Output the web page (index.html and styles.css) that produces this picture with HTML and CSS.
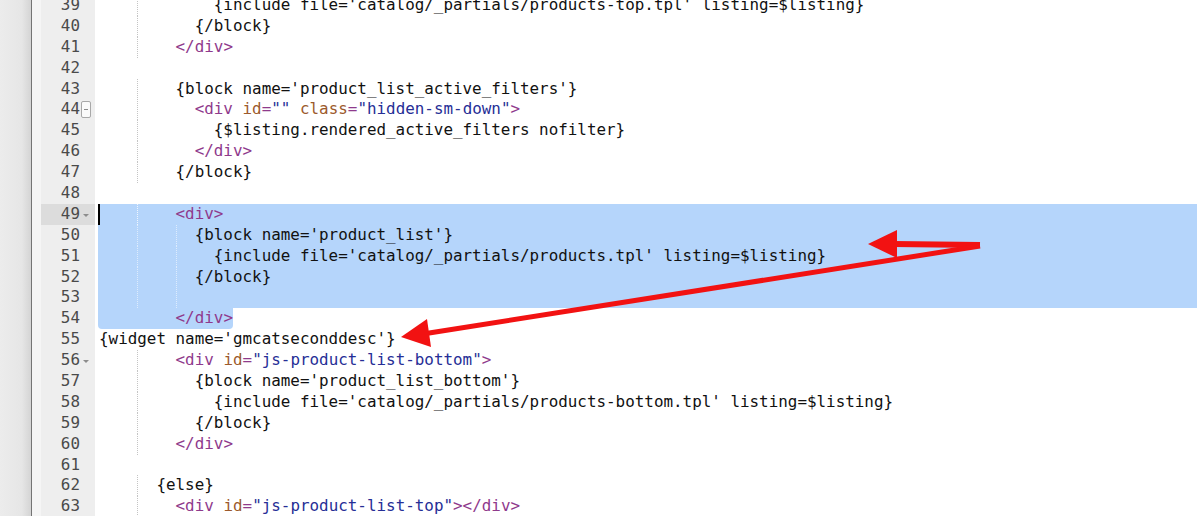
FILE: index.html
```html
<!DOCTYPE html>
<html lang="en">
<head>
  <meta charset="UTF-8">
  <title>category.tpl</title>
  <link rel="stylesheet" href="styles.css">
</head>
<body>
  <div class="editor">
    <div class="frame"></div>
    <div class="main">
      <div class="lines">
        <div class="line"><div class="num"><span class="n">39</span><span class="fold"></span></div><div class="code g4">            {include file='catalog/_partials/products-top.tpl' listing=$listing}</div></div>
        <div class="line"><div class="num"><span class="n">40</span><span class="fold"></span></div><div class="code g4">          {/block}</div></div>
        <div class="line"><div class="num"><span class="n">41</span><span class="fold"></span></div><div class="code g4">        <span class="tag">&lt;/div&gt;</span></div></div>
        <div class="line"><div class="num"><span class="n">42</span><span class="fold"></span></div><div class="code"></div></div>
        <div class="line"><div class="num"><span class="n">43</span><span class="fold"></span></div><div class="code g4">        {block name='product_list_active_filters'}</div></div>
        <div class="line"><div class="num"><span class="n">44</span><span class="fold"><span class="box"></span></span></div><div class="code g4">          <span class="tag">&lt;div</span> <span class="attr">id</span><span class="tag">=</span><span class="str">""</span> <span class="attr">class</span><span class="tag">=</span><span class="str">"hidden-sm-down"</span><span class="tag">&gt;</span></div></div>
        <div class="line"><div class="num"><span class="n">45</span><span class="fold"></span></div><div class="code g4">            {$listing.rendered_active_filters nofilter}</div></div>
        <div class="line"><div class="num"><span class="n">46</span><span class="fold"></span></div><div class="code g4">          <span class="tag">&lt;/div&gt;</span></div></div>
        <div class="line"><div class="num"><span class="n">47</span><span class="fold"></span></div><div class="code g4">        {/block}</div></div>
        <div class="line"><div class="num"><span class="n">48</span><span class="fold"></span></div><div class="code"></div></div>
        <div class="line"><div class="num current"><span class="n">49</span><span class="fold"><span class="tri"></span></span></div><div class="code g4 sel caret">        <span class="tag">&lt;div&gt;</span></div></div>
        <div class="line"><div class="num"><span class="n">50</span><span class="fold"></span></div><div class="code g48 sel">          {block name='product_list'}</div></div>
        <div class="line"><div class="num"><span class="n">51</span><span class="fold"></span></div><div class="code g48 sel">            {include file='catalog/_partials/products.tpl' listing=$listing}</div></div>
        <div class="line"><div class="num"><span class="n">52</span><span class="fold"></span></div><div class="code g48 sel">          {/block}</div></div>
        <div class="line"><div class="num"><span class="n">53</span><span class="fold"></span></div><div class="code g48 sel"></div></div>
        <div class="line"><div class="num"><span class="n">54</span><span class="fold"></span></div><div class="code g4"><span class="sel-end">        <span class="tag">&lt;/div&gt;</span></span></div></div>
        <div class="line"><div class="num"><span class="n">55</span><span class="fold"></span></div><div class="code">{widget name='gmcatseconddesc'}</div></div>
        <div class="line"><div class="num"><span class="n">56</span><span class="fold"><span class="tri"></span></span></div><div class="code g4">        <span class="tag">&lt;div</span> <span class="attr">id</span><span class="tag">=</span><span class="str">"js-product-list-bottom"</span><span class="tag">&gt;</span></div></div>
        <div class="line"><div class="num"><span class="n">57</span><span class="fold"></span></div><div class="code g4">          {block name='product_list_bottom'}</div></div>
        <div class="line"><div class="num"><span class="n">58</span><span class="fold"></span></div><div class="code g4">            {include file='catalog/_partials/products-bottom.tpl' listing=$listing}</div></div>
        <div class="line"><div class="num"><span class="n">59</span><span class="fold"></span></div><div class="code g4">          {/block}</div></div>
        <div class="line"><div class="num"><span class="n">60</span><span class="fold"></span></div><div class="code g4">        <span class="tag">&lt;/div&gt;</span></div></div>
        <div class="line"><div class="num"><span class="n">61</span><span class="fold"></span></div><div class="code"></div></div>
        <div class="line"><div class="num"><span class="n">62</span><span class="fold"></span></div><div class="code g4">      {else}</div></div>
        <div class="line"><div class="num"><span class="n">63</span><span class="fold"></span></div><div class="code g4">        <span class="tag">&lt;div</span> <span class="attr">id</span><span class="tag">=</span><span class="str">"js-product-list-top"</span><span class="tag">&gt;&lt;/div&gt;</span></div></div>
      </div>
    </div>
  </div>

  <!-- annotation arrows drawn over the editor -->
  <svg class="arrows" width="1197" height="516" viewBox="0 0 1197 516">
    <line x1="980" y1="245" x2="894" y2="244" stroke="#f21212" stroke-width="6"/>
    <polygon points="868,244 897,230 897,258" fill="#f21212"/>
    <line x1="980" y1="246" x2="426" y2="333.5" stroke="#f21212" stroke-width="5"/>
    <polygon points="401,337 427,319 431,347" fill="#f21212"/>
  </svg>
</body>
</html>
```

FILE: styles.css
```css
html, body {
  margin: 0;
  padding: 0;
  background: #fff;
  overflow: hidden;
}

.editor {
  display: flex;
  height: 516px;
  overflow: hidden;
  font-family: "DejaVu Sans Mono", monospace;
  font-size: 15.9px;
  line-height: 20.9px;
  color: #111;
}

.frame {
  width: 31px;
  flex: none;
  background: linear-gradient(to right, #ececec 0, #e6e6e6 70%, #d4d4d4 100%);
  border-right: 1px solid #747474;
}

.main {
  flex: 1;
  overflow: hidden;
}

.lines {
  margin-top: -5px;
}

.line {
  display: flex;
  height: 20.9px;
}

.num {
  width: 51px;
  flex: none;
  display: flex;
  justify-content: flex-end;
  align-items: center;
  padding: 0 3px 0 9px;
  color: #4a4a4a;
  background: linear-gradient(to right, #f5f5f5 9px, #eeeeee 9px);
}

.num.current {
  background: linear-gradient(to right, #f5f5f5 9px, #dcdcdc 9px);
}

.fold {
  width: 12px;
  height: 100%;
  display: flex;
  align-items: center;
  justify-content: center;
}

.box {
  width: 8px;
  height: 15px;
  border: 1px solid #a8a8a8;
  border-radius: 2px;
  background: #fafafa linear-gradient(#8a8a8a, #8a8a8a) center / 4px 1px no-repeat;
}

.tri {
  width: 0;
  height: 0;
  margin-top: 2px;
  border-left: 3px solid transparent;
  border-right: 3px solid transparent;
  border-top: 3px solid #8c8c8c;
}

.code {
  flex: 1;
  margin-left: 3px;
  padding-left: 1px;
  white-space: pre;
  background-repeat: repeat-y;
  background-size: 1px 2px;
}

.g4 {
  background-image: linear-gradient(#c4c4c4 50%, transparent 50%);
  background-position: calc(1px + 4ch) 0;
}

.g48 {
  background-image: linear-gradient(#c4c4c4 50%, transparent 50%), linear-gradient(#c4c4c4 50%, transparent 50%);
  background-position: calc(1px + 4ch) 0, calc(1px + 8ch) 0;
}

.sel {
  background-color: #b5d5fb;
}

.sel.g4, .sel.g48 {
  background-image: linear-gradient(rgba(255, 255, 255, 0.55) 50%, transparent 50%), linear-gradient(rgba(255, 255, 255, 0.55) 50%, transparent 50%);
}

.caret {
  box-shadow: inset 2px 0 0 #000;
}

.sel-end {
  display: inline-block;
  height: 20.9px;
  margin-left: -1px;
  padding-left: 1px;
  background: #b5d5fb;
  border-radius: 0 0 4px 4px;
}

.tag {
  color: #8f3a8c;
}

.attr {
  color: #9c5a2c;
}

.str {
  color: #262e96;
}

.arrows {
  position: absolute;
  top: 0;
  left: 0;
  pointer-events: none;
}
```
